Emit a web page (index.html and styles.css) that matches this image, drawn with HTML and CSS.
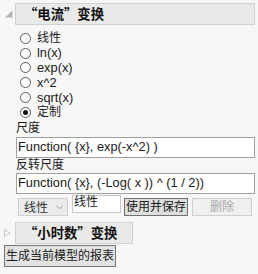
FILE: index.html
```html
<!DOCTYPE html>
<html lang="zh-CN">
<head>
<meta charset="utf-8">
<link rel="stylesheet" href="styles.css">
</head>
<body>
<div class="panel">
  <div class="outline-row">
    <svg class="tri" width="9" height="8" viewBox="0 0 9 8"><polygon points="8.5,0.5 8.5,7.5 1,7.5" fill="#b4b4b4"/></svg>
    <div class="outline-title wide">“电流”变换</div>
  </div>
  <div class="radios">
    <div class="radio"><span class="circle"></span><span>线性</span></div>
    <div class="radio"><span class="circle"></span><span class="latin">ln(x)</span></div>
    <div class="radio"><span class="circle"></span><span class="latin">exp(x)</span></div>
    <div class="radio"><span class="circle"></span><span class="latin">x^2</span></div>
    <div class="radio"><span class="circle"></span><span class="latin">sqrt(x)</span></div>
    <div class="radio"><span class="circle on"></span><span>定制</span></div>
  </div>
  <div class="field-label">尺度</div>
  <div class="textbox latin">Function( {x}, exp(-x^2) )</div>
  <div class="field-label">反转尺度</div>
  <div class="textbox second latin">Function( {x}, (-Log( x )) ^ (1 / 2))</div>
  <div class="controls">
    <div class="combo"><span>线性</span><svg width="7" height="5" viewBox="0 0 7 5"><polyline points="0.5,0.8 3.5,3.8 6.5,0.8" fill="none" stroke="#9a9a9a" stroke-width="1"/></svg></div>
    <div class="edit">线性</div>
    <div class="btn save">使用并保存</div>
    <div class="btn disabled">删除</div>
  </div>
  <div class="outline-row second-outline">
    <svg class="tri closed" width="9" height="10" viewBox="0 0 9 10"><polygon points="1.5,1.5 7,5 1.5,8.5" fill="none" stroke="#c4c4c4" stroke-width="1"/></svg>
    <div class="outline-title narrow">“小时数”变换</div>
  </div>
  <div class="btn report">生成当前模型的报表</div>
</div>
</body>
</html>
```

FILE: styles.css
```css
html, body {
  margin: 0;
  padding: 0;
  background: #f7f7f7;
}
body {
  font-family: "Liberation Sans", "Noto Sans CJK SC", sans-serif;
  font-size: 12px;
  color: #1a1a1a;
}
.latin {
  font-size: 12.8px;
}
.panel {
  padding-top: 3px;
  width: 258px;
}
.outline-row {
  display: flex;
  align-items: center;
  height: 22px;
}
.tri {
  margin-left: 4px;
  flex: none;
}
.outline-title {
  box-sizing: border-box;
  height: 22px;
  margin-left: 2px;
  background: #e9e9e9;
  border: 1px solid #d2d2d2;
  font-family: "Noto Sans CJK SC", sans-serif;
  font-weight: bold;
  font-size: 13.33px;
  line-height: 19px;
  padding-left: 8px;
  color: #111;
}
.outline-title.wide { width: 240px; }
.outline-title.narrow { width: 118px; }
.radios {
  margin-top: 6px;
  margin-bottom: 1px;
  margin-left: 20px;
}
.radio {
  display: flex;
  align-items: center;
  height: 14.8px;
  gap: 6px;
  line-height: 14px;
}
.circle {
  box-sizing: border-box;
  width: 11px;
  height: 11px;
  border-radius: 50%;
  border: 1px solid #5a5a5a;
  background: #fff;
  position: relative;
  flex: none;
}
.circle.on::after {
  content: "";
  position: absolute;
  left: 2px;
  top: 2px;
  width: 5px;
  height: 5px;
  border-radius: 50%;
  background: #111;
}
.field-label {
  margin-left: 16px;
  height: 14px;
  line-height: 14px;
}
.field-label + .textbox { margin-top: 2px; }
.textbox {
  box-sizing: border-box;
  margin-left: 16px;
  width: 239px;
  height: 21px;
  background: #fff;
  border: 1px solid #a0a0a0;
  padding-left: 1px;
  line-height: 18px;
  white-space: nowrap;
}
.textbox.second { margin-top: 1px; }
.controls {
  display: flex;
  align-items: flex-start;
  margin-top: 1px;
  height: 21px;
  margin-left: 18px;
}
.combo {
  box-sizing: border-box;
  margin-top: 3px;
  width: 50px;
  height: 18px;
  border: 1px solid #d0d0d0;
  background: #ececec;
  display: flex;
  align-items: center;
  padding-left: 5px;
  gap: 8px;
  color: #333;
}
.combo svg { margin-top: 1px; }
.edit {
  box-sizing: border-box;
  margin-left: 4px;
  width: 49px;
  height: 18px;
  background: #fff;
  border: 1px solid #c8c8c8;
  line-height: 12px;
  padding-left: 1px;
}
.btn {
  box-sizing: border-box;
  height: 18px;
  line-height: 16px;
  text-align: center;
}
.btn.save {
  margin-top: 3px;
  margin-left: 3px;
  width: 64px;
  border: 1px solid #707070;
  background: #dedede;
}
.btn.disabled {
  margin-top: 3px;
  margin-left: 4px;
  width: 60px;
  border: 1px solid #cfcfcf;
  background: #f0f0f0;
  color: #a8a8a8;
}
.second-outline {
  margin-top: 6px;
}
.tri.closed { margin-left: 3px; margin-right: 1px; }
.btn.report {
  margin-top: 1px;
  margin-left: 4px;
  width: 112px;
  height: 22px;
  line-height: 20px;
  border: 1px solid #767676;
  background: #e2e2e2;
}
```
